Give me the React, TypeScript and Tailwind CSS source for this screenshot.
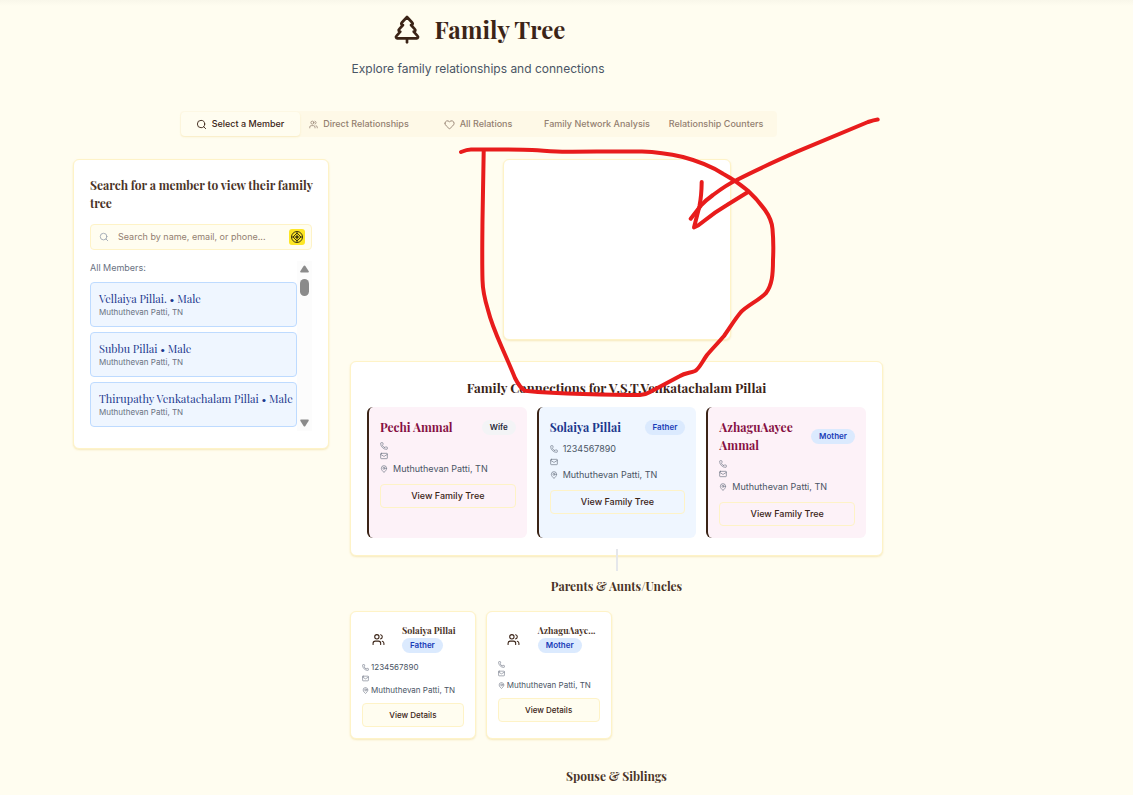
import { type ReactNode } from "react";
import { Heart, Mail, MapPin, Phone, Search, TreePine, Users } from "lucide-react";

const serif = "font-['Playfair_Display','Liberation_Serif',serif]";
const panel = "rounded-md border border-[#fef3c7] bg-white shadow-[0_1px_2px_rgba(235,205,110,0.4)]";

const members = ["Vellaiya Pillai.", "Subbu Pillai", "Thirupathy Venkatachalam Pillai"];

const tabs: { label: string; icon?: ReactNode }[] = [
  { label: "Select a Member", icon: <Search size={11} className="mr-[5px] shrink-0" /> },
  { label: "Direct Relationships", icon: <Users size={9} className="mr-[5px] shrink-0" /> },
  { label: "All Relations", icon: <Heart size={11} className="mr-[5px] shrink-0" /> },
  { label: "Family Network Analysis" },
  { label: "Relationship Counters" },
];

type Relative = { name: string; relation: string; phone?: string; female?: boolean };

const connections: Relative[] = [
  { name: "Pechi Ammal", relation: "Wife", female: true },
  { name: "Solaiya Pillai", relation: "Father", phone: "1234567890" },
  { name: "AzhaguAayee Ammal", relation: "Mother", female: true },
];

const parents: Relative[] = [
  { name: "Solaiya Pillai", relation: "Father", phone: "1234567890" },
  { name: "AzhaguAaye...", relation: "Mother" },
];

function Badge({ relation }: { relation: string }) {
  const tone = relation === "Wife" ? "bg-gray-100 text-gray-800" : "bg-blue-100 text-blue-800";
  return (
    <span className={`inline-block shrink-0 rounded-full px-2 text-[8px] leading-[15px] font-semibold ${tone}`}>
      {relation}
    </span>
  );
}

function ConnectionCard({ person }: { person: Relative }) {
  return (
    <article
      className={`rounded-md border-l-2 border-[#3b2417] p-[11px] pb-3 ${person.female ? "bg-pink-50" : "bg-blue-50"}`}
    >
      <div className="flex items-center justify-between gap-2">
        <h3 className={`${serif} text-[12px] leading-[18px] font-bold ${person.female ? "text-pink-900" : "text-blue-900"}`}>
          {person.name}
        </h3>
        <Badge relation={person.relation} />
      </div>
      <div className="mt-1.5 flex flex-col gap-0.5 text-[9px] leading-[14px] text-gray-600">
        <div className="flex items-center gap-[5px]">
          <Phone size={8} className="text-gray-500" />
          {person.phone && <span>{person.phone}</span>}
        </div>
        <div className="flex items-center">
          <Mail size={8} className="text-gray-500" />
        </div>
        <div className="flex items-center gap-[5px]">
          <MapPin size={8} className="text-gray-500" />
          <span>Muthuthevan Patti, TN</span>
        </div>
      </div>
      <button className="mt-2 h-6 w-full rounded border border-[#fef3c7] text-[9px] font-medium text-[#3b2417]">
        View Family Tree
      </button>
    </article>
  );
}

function ParentCard({ person }: { person: Relative }) {
  return (
    <article className={`${panel} min-w-0 p-[11px]`}>
      <div className="flex gap-2">
        <div className="flex size-8 shrink-0 items-center justify-center text-[#3b2417]">
          <Users size={13} />
        </div>
        <div className="min-w-0">
          <h3 className={`${serif} text-[9px] leading-[15px] font-bold whitespace-nowrap text-[#4a3428]`}>{person.name}</h3>
          <div className="flex">
            <Badge relation={person.relation} />
          </div>
        </div>
      </div>
      <div className="mt-1.5 flex flex-col gap-0.5 text-[8px] leading-[12px] text-gray-600">
        <div className="flex items-center gap-0.5">
          <Phone size={7} className="text-gray-500" />
          {person.phone && <span>{person.phone}</span>}
        </div>
        <div className="flex items-center">
          <Mail size={7} className="text-gray-500" />
        </div>
        <div className="flex items-center gap-0.5">
          <MapPin size={7} className="text-gray-500" />
          <span>Muthuthevan Patti, TN</span>
        </div>
      </div>
      <button className="mt-[7px] h-6 w-full rounded border border-[#fef3c7] bg-[#fffdf0] text-[8px] font-medium text-[#3b2417]">
        View Details
      </button>
    </article>
  );
}

function Scrollbar() {
  return (
    <div aria-hidden="true" className="flex w-[15px] flex-col items-center bg-[#fcfcfc] py-1">
      <svg width="9" height="8" viewBox="0 0 9 8" className="fill-[#8b8b8b]">
        <path d="M4.5 0.5Q5 0.5 5.4 1L8.7 6.3Q9 7.5 8 7.5H1Q0 7.5 0.3 6.3L3.6 1Q4 0.5 4.5 0.5Z" />
      </svg>
      <div className="mt-1.5 h-[17px] w-[9px] rounded-full bg-[#8b8b8b]" />
      <svg width="9" height="8" viewBox="0 0 9 8" className="mt-auto fill-[#8b8b8b]">
        <path d="M4.5 7.5Q5 7.5 5.4 7L8.7 1.7Q9 0.5 8 0.5H1Q0 0.5 0.3 1.7L3.6 7Q4 7.5 4.5 7.5Z" />
      </svg>
    </div>
  );
}

function MemberSearch() {
  return (
    <section className={`${panel} p-4 pb-[17px]`}>
      <h2 className={`${serif} -mr-1 text-[12px] leading-[18px] font-bold text-[#4a3428]`}>
        <label htmlFor="member-search">Search for a member to view their family tree</label>
      </h2>
      <div className="mt-3 flex h-[26px] items-center rounded border border-[#fef3c7] bg-[#fffdf0] pr-1.5 pl-2">
        <Search size={10} className="shrink-0 text-gray-400" />
        <input
          id="member-search"
          type="text"
          placeholder="Search by name, email, or phone..."
          className="ml-[9px] min-w-0 flex-1 bg-transparent text-[9px] outline-none placeholder:text-[#937f70]"
        />
        <button aria-label="Locate" className="flex size-4 items-center justify-center rounded-[3px] bg-[#fde625] text-[#3f3a10]">
          <svg width="12" height="12" viewBox="0 0 24 24" fill="none" stroke="currentColor" strokeWidth="2">
            <circle cx="12" cy="12" r="11" />
            <path d="M12 4L20 12L12 20L4 12ZM12 1v6M12 17v6M1 12h6M17 12h6" />
            <circle cx="12" cy="12" r="2.5" fill="currentColor" />
          </svg>
        </button>
      </div>
      <div className="mt-[11px] flex h-[170px]">
        <div className="min-w-0 flex-1">
          <p className="text-[9px] leading-[14px] text-gray-500">All Members:</p>
          <ul className="mt-[7px] flex flex-col gap-[5px]">
            {members.map((name) => (
              <li key={name}>
                <button className="block h-[45px] w-full rounded border border-blue-200 bg-blue-50 pl-2 text-left">
                  <span className={`${serif} block text-[11px] leading-4 whitespace-nowrap text-blue-900`}>{name} • Male</span>
                  <span className="block text-[8px] leading-[11px] text-gray-500">Muthuthevan Patti, TN</span>
                </button>
              </li>
            ))}
          </ul>
        </div>
        <Scrollbar />
      </div>
    </section>
  );
}

function Annotation() {
  return (
    <svg
      aria-hidden="true"
      width="430"
      height="290"
      viewBox="455 112 430 290"
      className="pointer-events-none absolute top-[112px] left-[455px] fill-none stroke-[#e81c1c] stroke-4"
      strokeLinecap="round"
      strokeLinejoin="round"
    >
      <path d="M461 152Q467 149.500 471 149.500C490 149.500 505 149.500 523 149.700C540 150 550 151.700 567 151.700C592 151.700 620 151.200 642 151.500C660 152 670 154 683 157C698 161 711 166 723 173.700C733 179 740 184 748 190.700C756 198 760 203 765 210C770 217 772 223 772.500 229C773.500 240 773.500 250 773 260C773 275 772 285 766 293C758 301 748 305 741 312C735 319 731 326 724 336C718 343 712 349 707 355C702 362 699 369 695 371C690 373 685 373 680 376L650 392Q645 395 640 395C620 395 600 394.500 583 394C563 393.500 543 392.500 525 390.700Q520 388 515 378C511 368 506 357 501.700 347C496 334 491 322 488 310C484 297 482.700 290 482.500 280C482 260 482.300 240 482.500 220L483.700 151" />
      <path d="M877.700 119.500Q874 120 868 122L797 151.700C776 161 756 170 736.700 180C728 184 721 189 713 195Q706 200 701 205.500Q696 212 690.700 218.700" />
      <path d="M701.700 182Q701.500 196 699.500 206L694 227.500Q698 226 703 221.700Q715 212 727 205L748 192" />
    </svg>
  );
}

export default function App() {
  return (
    <div className="relative h-screen overflow-hidden bg-[#fffdf0] bg-linear-to-b from-[#f9f7ea] to-[#fffdf0] to-[6px] pr-[177px] font-['Inter','Liberation_Sans',sans-serif]">
      <div className="mx-auto max-w-[810px]">
        <header className="flex flex-col items-center pt-3">
          <div className="flex items-center gap-3 text-[#3b2417]">
            <TreePine size={32} />
            <h1 className={`${serif} text-[24px] leading-[34px] font-bold`}>Family Tree</h1>
          </div>
          <p className="mt-[13px] text-[12px] leading-5 text-gray-600">Explore family relationships and connections</p>
        </header>

        <div role="tablist" className="mx-auto mt-8 grid h-[26px] max-w-[597px] grid-cols-5 rounded bg-[#fef9e7] p-px">
          {tabs.map((tab, i) => (
            <button
              key={tab.label}
              role="tab"
              aria-selected={i === 0}
              className={`flex items-center justify-center rounded text-[9px] font-medium whitespace-nowrap ${
                i === 0 ? "bg-[#fffdf0] text-[#3b2417] shadow-[0_1px_2px_rgba(235,205,110,0.3)]" : "text-[#937f70]"
              }`}
            >
              {tab.icon}
              {tab.label}
            </button>
          ))}
        </div>

        <main className="mt-[22px] grid grid-cols-3 items-start gap-[21px]">
          <MemberSearch />
          <div className="col-span-2">
            <div className={`${panel} mx-auto h-[181px] w-[228px]`} />

            <section className={`${panel} relative mt-[21px] p-4 pb-[17px]`}>
              <h2 className={`${serif} text-center text-[13px] leading-5 font-bold text-[#3b2417]`}>
                Family Connections for V.S.T.Venkatachalam Pillai
              </h2>
              <div className="mt-[9px] grid grid-cols-3 gap-2.5">
                {connections.map((person) => (
                  <ConnectionCard key={person.name} person={person} />
                ))}
              </div>
              <div className="absolute -bottom-4 left-1/2 h-[22px] w-0.5 -translate-x-1/2 bg-gray-200" />
            </section>

            <section className="mt-[21px]">
              <h2 className={`${serif} text-center text-[12px] leading-[18px] font-bold text-[#4a3428]`}>
                Parents &amp; Aunts/Uncles
              </h2>
              <div className="mt-4 grid grid-cols-4 gap-2.5">
                {parents.map((person) => (
                  <ParentCard key={person.name} person={person} />
                ))}
              </div>
            </section>

            <section className="mt-7">
              <h2 className={`${serif} text-center text-[12px] leading-[18px] font-bold text-[#4a3428]`}>
                Spouse &amp; Siblings
              </h2>
            </section>
          </div>
        </main>
      </div>
      <Annotation />
    </div>
  );
}
